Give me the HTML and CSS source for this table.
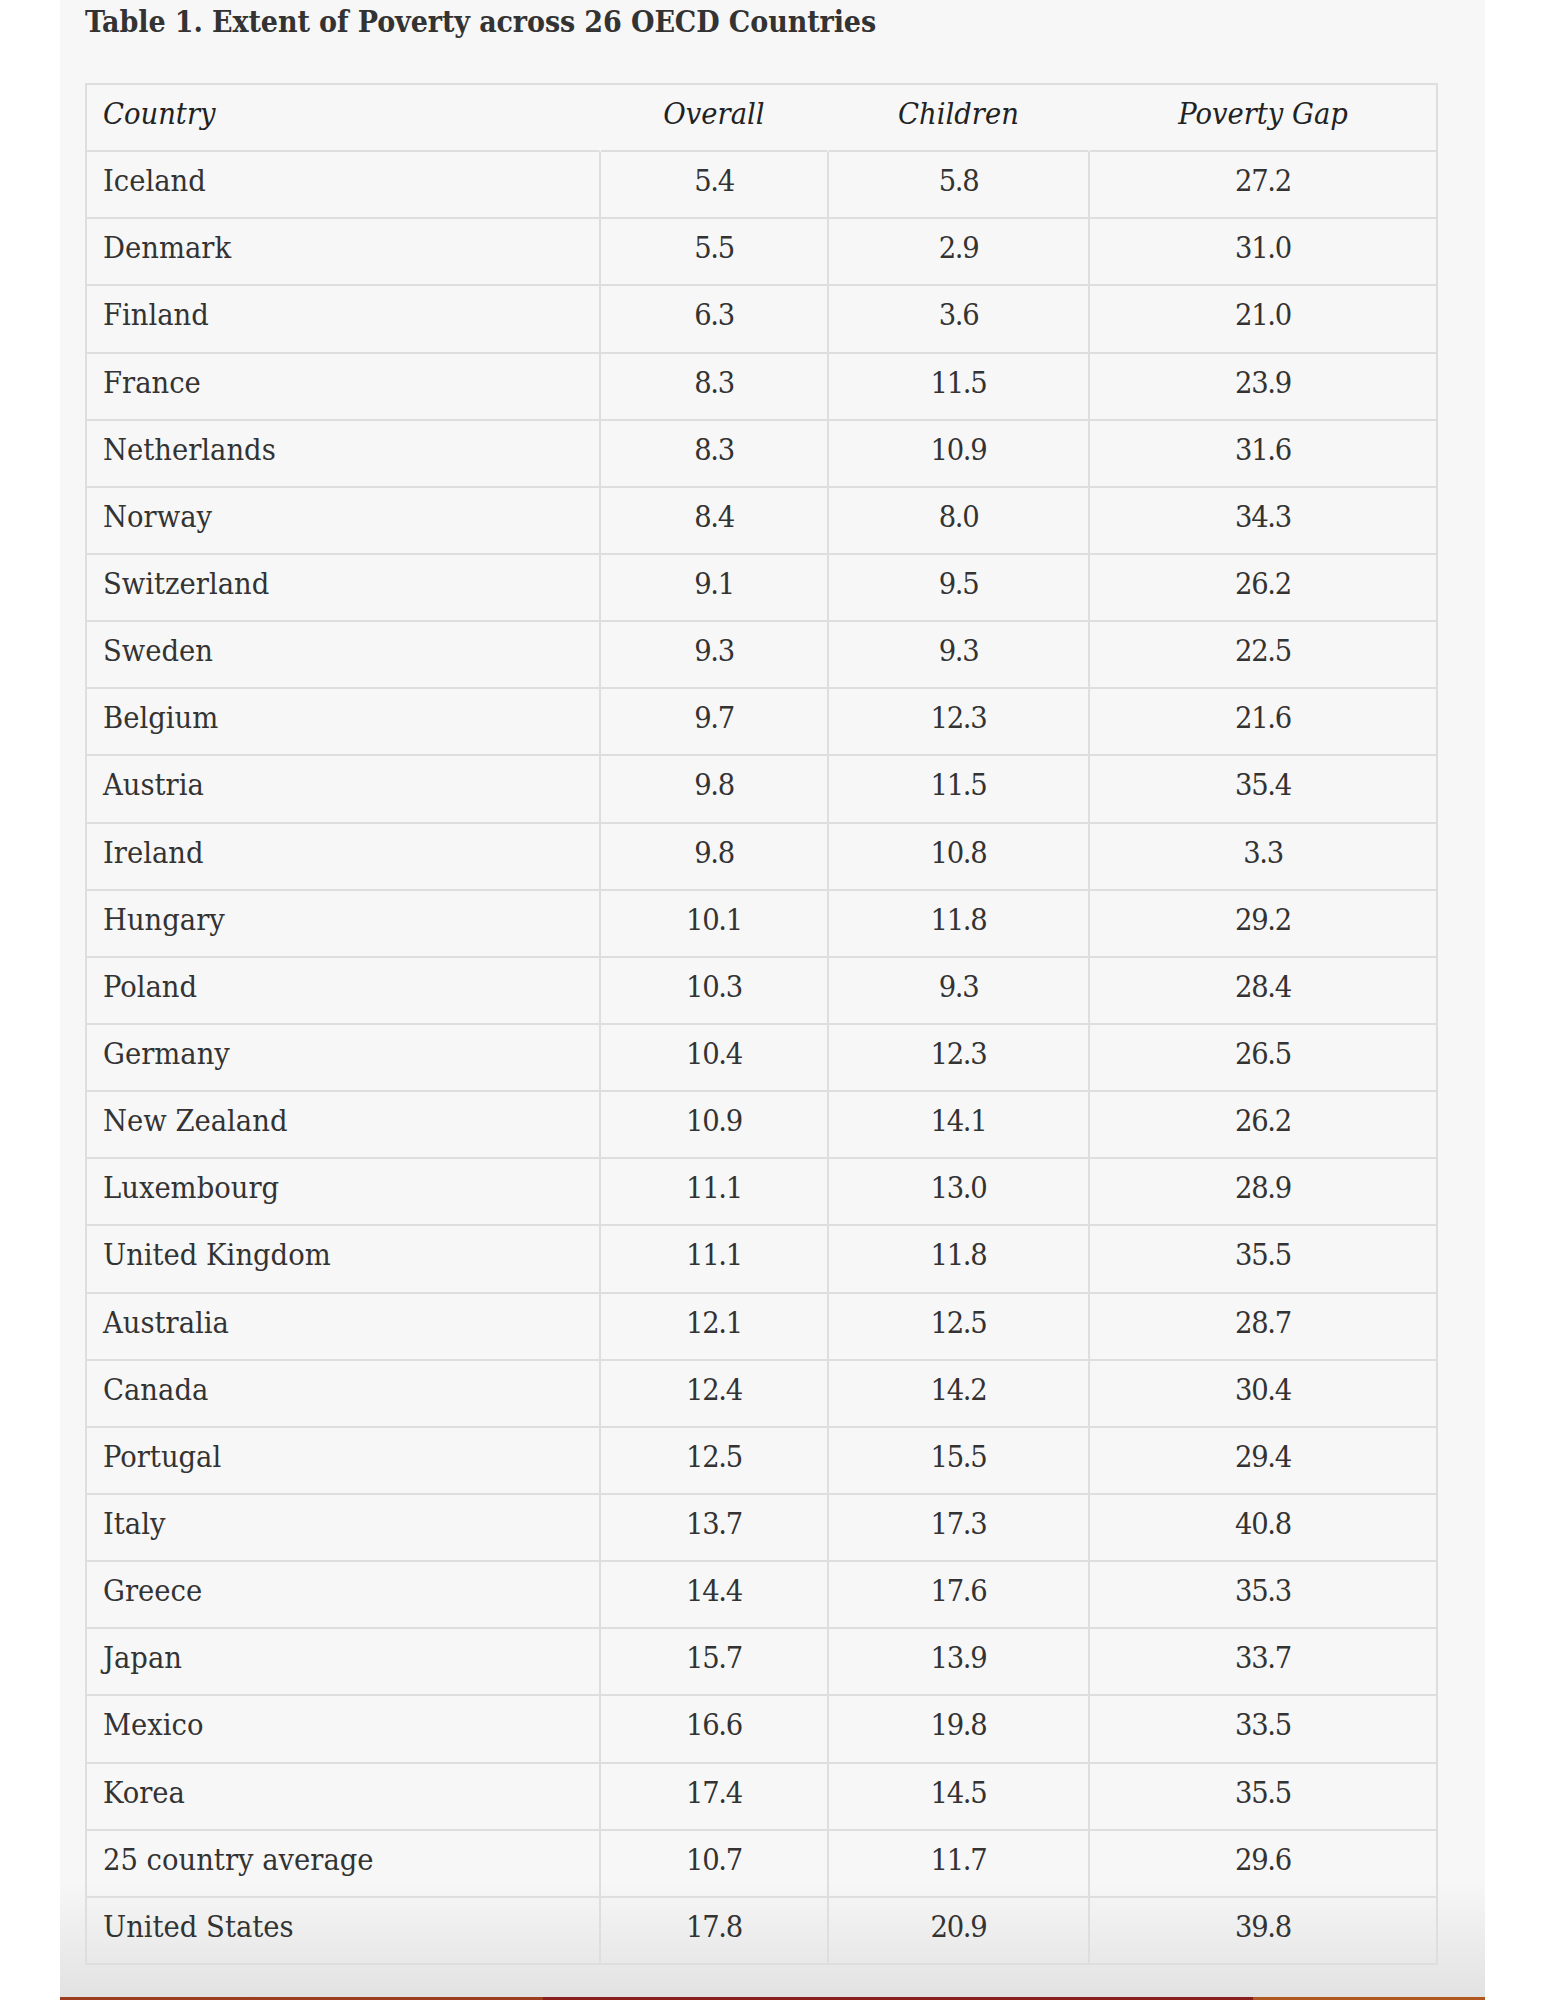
FILE: index.html
```html
<!DOCTYPE html>
<html lang="en">
<head>
<meta charset="utf-8">
<title>Table 1. Extent of Poverty across 26 OECD Countries</title>
<link rel="stylesheet" href="styles.css">
</head>
<body>
<div class="page">
  <div class="panel">
    <h2 class="title">Table 1. Extent of Poverty across 26 OECD Countries</h2>
    <table class="data">
      <colgroup>
        <col class="col-country">
        <col class="col-overall">
        <col class="col-children">
        <col class="col-gap">
      </colgroup>
      <thead>
        <tr><th class="name">Country</th><th>Overall</th><th>Children</th><th>Poverty Gap</th></tr>
      </thead>
      <tbody>
        <tr><td class="name">Iceland</td><td>5.4</td><td>5.8</td><td>27.2</td></tr>
        <tr><td class="name">Denmark</td><td>5.5</td><td>2.9</td><td>31.0</td></tr>
        <tr><td class="name">Finland</td><td>6.3</td><td>3.6</td><td>21.0</td></tr>
        <tr><td class="name">France</td><td>8.3</td><td>11.5</td><td>23.9</td></tr>
        <tr><td class="name">Netherlands</td><td>8.3</td><td>10.9</td><td>31.6</td></tr>
        <tr><td class="name">Norway</td><td>8.4</td><td>8.0</td><td>34.3</td></tr>
        <tr><td class="name">Switzerland</td><td>9.1</td><td>9.5</td><td>26.2</td></tr>
        <tr><td class="name">Sweden</td><td>9.3</td><td>9.3</td><td>22.5</td></tr>
        <tr><td class="name">Belgium</td><td>9.7</td><td>12.3</td><td>21.6</td></tr>
        <tr><td class="name">Austria</td><td>9.8</td><td>11.5</td><td>35.4</td></tr>
        <tr><td class="name">Ireland</td><td>9.8</td><td>10.8</td><td>3.3</td></tr>
        <tr><td class="name">Hungary</td><td>10.1</td><td>11.8</td><td>29.2</td></tr>
        <tr><td class="name">Poland</td><td>10.3</td><td>9.3</td><td>28.4</td></tr>
        <tr><td class="name">Germany</td><td>10.4</td><td>12.3</td><td>26.5</td></tr>
        <tr><td class="name">New Zealand</td><td>10.9</td><td>14.1</td><td>26.2</td></tr>
        <tr><td class="name">Luxembourg</td><td>11.1</td><td>13.0</td><td>28.9</td></tr>
        <tr><td class="name">United Kingdom</td><td>11.1</td><td>11.8</td><td>35.5</td></tr>
        <tr><td class="name">Australia</td><td>12.1</td><td>12.5</td><td>28.7</td></tr>
        <tr><td class="name">Canada</td><td>12.4</td><td>14.2</td><td>30.4</td></tr>
        <tr><td class="name">Portugal</td><td>12.5</td><td>15.5</td><td>29.4</td></tr>
        <tr><td class="name">Italy</td><td>13.7</td><td>17.3</td><td>40.8</td></tr>
        <tr><td class="name">Greece</td><td>14.4</td><td>17.6</td><td>35.3</td></tr>
        <tr><td class="name">Japan</td><td>15.7</td><td>13.9</td><td>33.7</td></tr>
        <tr><td class="name">Mexico</td><td>16.6</td><td>19.8</td><td>33.5</td></tr>
        <tr><td class="name">Korea</td><td>17.4</td><td>14.5</td><td>35.5</td></tr>
        <tr><td class="name">25 country average</td><td>10.7</td><td>11.7</td><td>29.6</td></tr>
        <tr><td class="name">United States</td><td>17.8</td><td>20.9</td><td>39.8</td></tr>
      </tbody>
    </table>
  </div>
  <div class="rule"><span class="seg seg-a"></span><span class="seg seg-b"></span><span class="seg seg-c"></span></div>
</div>
</body>
</html>
```
FILE: styles.css
```css
html, body {
  margin: 0;
  padding: 0;
  background: #ffffff;
}

.page {
  width: 1425px;
  margin-left: 60px;
}

.panel {
  background: linear-gradient(to bottom, #f7f7f7 0, #f7f7f7 1880px, #e2e2e2 1997px);
  padding: 0 47px 0 25px;
  height: 1997px;
  box-sizing: border-box;
}

.title {
  margin: 0;
  padding-top: 4px;
  height: 83px;
  box-sizing: border-box;
  font-family: "DejaVu Serif Condensed", "DejaVu Serif", serif;
  font-weight: bold;
  font-size: 30px;
  line-height: 36px;
  color: #333333;
  letter-spacing: -0.1px;
}

.data {
  table-layout: fixed;
  width: 1353px;
  border-collapse: separate;
  border-spacing: 0;
  border-top: 2px solid #dedede;
  border-left: 2px solid #dedede;
  font-family: "DejaVu Serif Condensed", "DejaVu Serif", serif;
  font-size: 30.5px;
  color: #333333;
}

.col-country { width: 514px; }
.col-overall { width: 228px; }
.col-children { width: 261px; }
.col-gap { width: 348px; }

.data th,
.data td {
  height: 58.15px;
  padding: 0 16px 7px;
  border-bottom: 2px solid #dedede;
  border-right: 2px solid #dedede;
  text-align: center;
  vertical-align: middle;
  line-height: 32px;
  white-space: nowrap;
  box-sizing: content-box;
}

.data td {
  letter-spacing: -1.3px;
}

.data td.name {
  letter-spacing: 0;
}

.data th {
  font-style: italic;
  font-weight: normal;
  color: #222222;
  border-right-color: transparent;
}

.data th:last-child {
  border-right-color: #dedede;
}

.data .name {
  text-align: left;
}

.rule {
  display: flex;
  height: 3px;
}

.seg { display: block; height: 3px; }
.seg-a { width: 483px; background: #9b3d1e; }
.seg-b { width: 710px; background: #8a1d1d; }
.seg-c { flex: 1; background: #b0561f; }
```
